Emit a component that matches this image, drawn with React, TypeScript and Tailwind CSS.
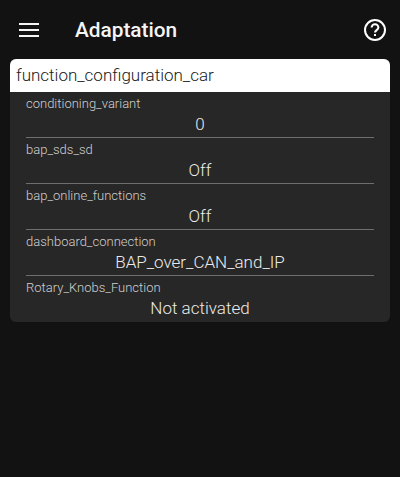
const rows = [
  ["conditioning_variant", "0"],
  ["bap_sds_sd", "Off"],
  ["bap_online_functions", "Off"],
  ["dashboard_connection", "BAP_over_CAN_and_IP"],
  ["Rotary_Knobs_Function", "Not activated"],
];

export default function App() {
  return (
    <div className="w-[400px] h-[477px] bg-[#121212] overflow-hidden font-['Roboto',sans-serif] flex flex-col">
      <header className="h-[59px] flex items-center pl-[19px] pr-[13px] shrink-0">
        <svg width="20" height="14" viewBox="0 0 20 14" className="text-[#f5f5f5] shrink-0">
          <path d="M0 1h20M0 7h20M0 13h20" stroke="currentColor" strokeWidth="2" fill="none" />
        </svg>
        <h1 className="ml-[36px] mt-[2px] text-[20.8px] font-medium text-[#f5f5f5] leading-none">Adaptation</h1>
        <svg width="24" height="24" viewBox="0 0 24 24" className="ml-auto text-white" fill="none">
          <circle cx="12" cy="12" r="10" stroke="currentColor" strokeWidth="2" />
          <path d="M8.6 9.6a3.4 3.4 0 0 1 6.8 0c0 2.4-3.4 2.6-3.4 4.9" stroke="currentColor" strokeWidth="2" />
          <rect x="11" y="16" width="2" height="2" fill="currentColor" />
        </svg>
      </header>
      <section className="mx-[10px] rounded-[6px] overflow-hidden bg-[#272727]">
        <div className="h-[33px] bg-white flex items-center px-[6px] text-[17px] font-light text-[#212121] leading-none">
          function_configuration_car
        </div>
        <div className="px-[16px]">
          {rows.map(([label, value], i) => (
            <div key={label} className={`h-[46px] flex flex-col ${i < 4 ? "border-b border-[#6e6e6e]" : ""}`}>
              <div className="text-[13px] font-light text-[#d0d0d0] leading-[15px] mt-[4px]">{label}</div>
              <div className="text-[17px] font-light text-[#ebebeb] leading-[21px] text-center mt-[3px]">{value}</div>
            </div>
          ))}
        </div>
      </section>
    </div>
  );
}
